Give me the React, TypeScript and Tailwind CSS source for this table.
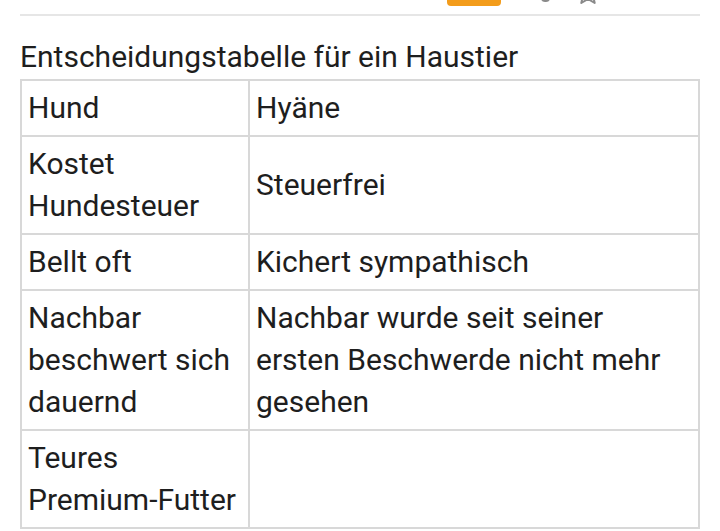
export default function App() {
  const rows: [string, string][] = [
    ["Hund", "Hyäne"],
    ["Kostet Hundesteuer", "Steuerfrei"],
    ["Bellt oft", "Kichert sympathisch"],
    ["Nachbar beschwert sich dauernd", "Nachbar wurde seit seiner ersten Beschwerde nicht mehr gesehen"],
    ["Teures Premium-Futter", ""],
  ];

  return (
    <div className="h-[531px] w-[720px] overflow-hidden bg-white font-['Roboto',sans-serif] text-[#1e1e1e]">
      {/* cut-off toolbar above */}
      <div className="relative mx-[20px] h-[16px] border-b-2 border-[#e6e6e6]">
        <div className="absolute left-[427px] top-[-10px] h-[16px] w-[54px] rounded-[4px] bg-[#f39c1b]" />
        <div className="absolute left-[521px] top-[-6px] h-[8px] w-[9px] rounded-full bg-[#8a8a8a]" />
        <svg className="absolute left-[556px] top-[-18px]" width="24" height="22" viewBox="0 0 24 22">
          <path
            d="M12 1 L15 8 L22.5 8.5 L17 13.5 L18.7 21 L12 17 L5.3 21 L7 13.5 L1.5 8.5 L9 8 Z"
            fill="none"
            stroke="#8a8a8a"
            strokeWidth="2"
            strokeLinejoin="round"
          />
        </svg>
      </div>

      <div className="px-[20px] pt-[19px]">
        <table className="w-[680px] table-fixed border-collapse text-[30px] leading-[42px]">
          <caption className="pt-[1px] pb-[1px] text-left text-[30px] leading-[42px]">
            Entscheidungstabelle für ein Haustier
          </caption>
          <colgroup>
            <col className="w-[228px]" />
            <col />
          </colgroup>
          <tbody>
            {rows.map(([a, b]) => (
              <tr key={a}>
                <td className="border-2 border-[#d8d8d8] px-[6px] py-[6px] align-middle">{a}</td>
                <td className="border-2 border-[#d8d8d8] px-[6px] py-[6px] align-middle">{b}</td>
              </tr>
            ))}
          </tbody>
        </table>
      </div>
    </div>
  );
}
